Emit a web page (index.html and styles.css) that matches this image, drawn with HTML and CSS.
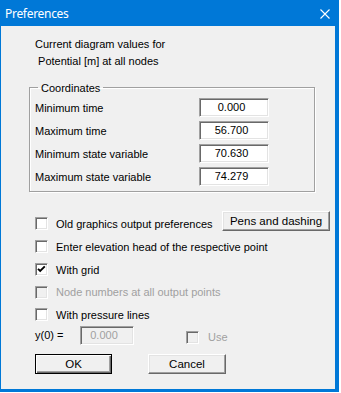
FILE: index.html
```html
<!DOCTYPE html>
<html lang="en">
<head>
    <meta charset="UTF-8">
    <title>Preferences</title>
    <link rel="stylesheet" href="styles.css">
</head>
<body>
<div class="dialog">
    <div class="titlebar">
        <span class="title">Preferences</span>
        <svg class="close" width="10" height="10" viewBox="0 0 10 10"><path d="M0.5 0.5L9.5 9.5M9.5 0.5L0.5 9.5" stroke="#fff" stroke-width="1.1" fill="none"/></svg>
    </div>

    <div class="client">
        <p class="info">Current diagram values for<br>&nbsp;Potential [m] at all nodes</p>

        <fieldset class="group">
            <legend>Coordinates</legend>
            <div class="group-rows">
                <div class="coord-row"><span>Minimum time</span><span class="field">0.000</span></div>
                <div class="coord-row"><span>Maximum time</span><span class="field">56.700</span></div>
                <div class="coord-row"><span>Minimum state variable</span><span class="field">70.630</span></div>
                <div class="coord-row"><span>Maximum state variable</span><span class="field">74.279</span></div>
            </div>
        </fieldset>

        <div class="checks">
            <div class="check-row">
                <span class="box"></span><span>Old graphics output preferences</span>
                <span class="btn btn-pens">Pens and dashing</span>
            </div>
            <div class="check-row">
                <span class="box"></span><span>Enter elevation head of the respective point</span>
            </div>
            <div class="check-row">
                <span class="box"><svg width="9" height="9" viewBox="0 0 9 9"><path d="M1 3.8L3.2 6L7.8 1.4" stroke="#000" stroke-width="1.9" fill="none"/></svg></span><span>With grid</span>
            </div>
            <div class="check-row short disabled">
                <span class="box"></span><span>Node numbers at all output points</span>
            </div>
            <div class="check-row">
                <span class="box"></span><span>With pressure lines</span>
            </div>
        </div>

        <div class="y-row">
            <span class="y-label">y(0) =</span>
            <span class="field field-off">0.000</span>
            <span class="use disabled"><span class="box"></span><span>Use</span></span>
        </div>

        <div class="buttons">
            <span class="btn btn-default">OK</span>
            <span class="btn btn-cancel">Cancel</span>
        </div>
    </div>
</div>
</body>
</html>
```

FILE: styles.css
```css
body {
    margin: 0;
    background: #fff;
    font-family: "Liberation Sans", Arial, sans-serif;
    font-size: 11px;
    color: #000;
}
.dialog {
    width: 339px;
    height: 392px;
    box-sizing: border-box;
    border-left: 1px solid #0078d7;
    border-right: 4px solid #0078d7;
    border-bottom: 3px solid #0078d7;
    background: #f0f0f0;
}
.titlebar {
    height: 26px;
    background: #0078d7;
    color: #fff;
    display: flex;
    align-items: center;
    justify-content: space-between;
    padding: 0 5px 0 4px;
}
.title {
    font-family: "Noto Sans", sans-serif;
    font-size: 12px;
    letter-spacing: -0.3px;
}
.close {
    display: block;
    margin-top: 2px;
}
.client {
    padding: 10px 0 0 28px;
}
.info {
    margin: 0 0 0 6px;
    line-height: 17px;
}
.group {
    margin: 10px 0 0 0;
    padding: 0;
    width: 286px;
    box-sizing: border-box;
    border: 1px solid #a0a0a0;
    box-shadow: inset 1px 1px #fff, 1px 1px #fff;
}
.group legend {
    margin-left: 8px;
    padding: 2px 3px 0;
    line-height: 12px;
}
.group-rows {
    display: flex;
    flex-direction: column;
    gap: 4px;
    padding: 4px 0 5px 5px;
}
.coord-row {
    display: grid;
    grid-template-columns: 164px 70px;
    align-items: center;
    height: 19px;
}
.field {
    display: block;
    height: 19px;
    box-sizing: border-box;
    background: #fff;
    border-top: 1px solid #a0a0a0;
    border-left: 1px solid #a0a0a0;
    border-right: 1px solid #fff;
    border-bottom: 1px solid #fff;
    box-shadow: inset 1px 1px #696969, inset -1px -1px #e3e3e3;
    text-align: center;
    line-height: 17px;
    padding-right: 5px;
}
.field-off {
    width: 54px;
    background: #f0f0f0;
    color: #a0a0a0;
    padding-right: 6px;
}
.checks {
    margin-top: 20px;
    padding-left: 6px;
}
.check-row {
    display: flex;
    align-items: center;
    height: 23px;
}
.check-row.short {
    height: 22px;
}
.box {
    width: 13px;
    height: 13px;
    flex: none;
    box-sizing: border-box;
    background: #fff;
    border-top: 1px solid #a0a0a0;
    border-left: 1px solid #a0a0a0;
    border-right: 1px solid #fff;
    border-bottom: 1px solid #fff;
    box-shadow: inset 1px 1px #696969, inset -1px -1px #e3e3e3;
    margin-right: 8px;
    padding: 1px;
}
.box svg {
    display: block;
}
.disabled {
    color: #a0a0a0;
}
.disabled .box {
    background: #f0f0f0;
}
.btn {
    display: block;
    height: 20px;
    box-sizing: border-box;
    background: #f0f0f0;
    border-top: 1px solid #fff;
    border-left: 1px solid #fff;
    border-right: 1px solid #696969;
    border-bottom: 1px solid #696969;
    box-shadow: inset -1px -1px #a0a0a0, inset 1px 1px #e3e3e3;
    text-align: center;
    line-height: 18px;
    font-size: 11.5px;
}
.btn-pens {
    width: 108px;
    margin-left: auto;
    margin-right: 5px;
    align-self: flex-start;
    margin-top: -1px;
}
.y-row {
    display: flex;
    align-items: center;
    height: 20px;
    margin-top: -1px;
    padding-left: 6px;
}
.y-label {
    width: 45px;
}
.use {
    display: flex;
    align-items: center;
    margin: 4px 0 0 52px;
}
.use .box {
    margin-right: 9px;
}
.buttons {
    display: flex;
    gap: 36px;
    margin-top: 9px;
    padding-left: 6px;
}
.btn-default {
    width: 77px;
    border: 1px solid #000;
    box-shadow: inset 1px 1px #fff, inset -1px -1px #696969, inset -2px -2px #a0a0a0;
}
.btn-cancel {
    width: 78px;
}
```
